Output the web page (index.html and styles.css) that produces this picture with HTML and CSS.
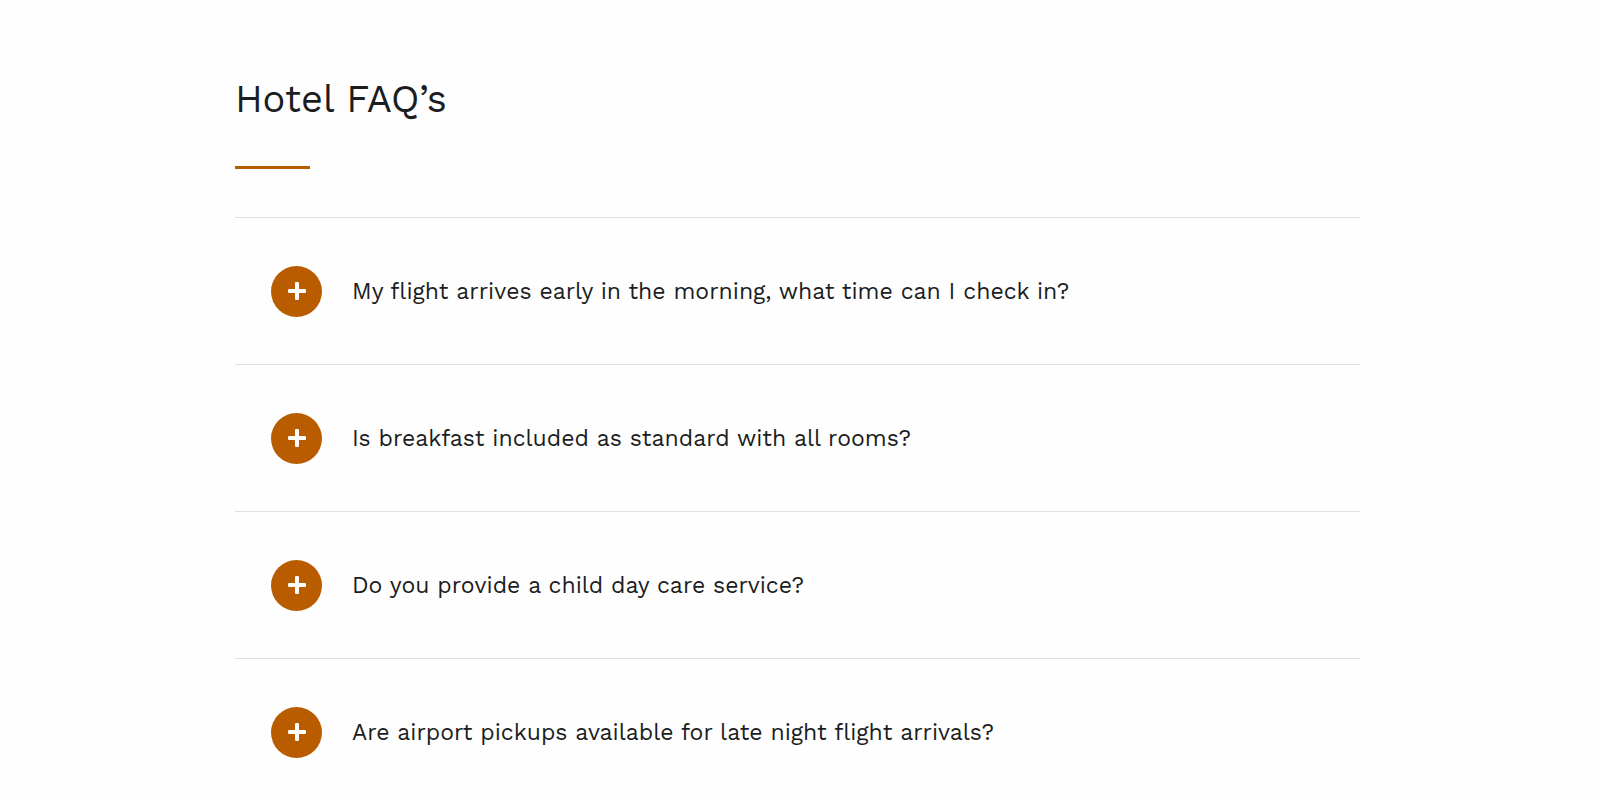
FILE: index.html
```
<!DOCTYPE html>
<html lang="en">
<head>
    <meta charset="UTF-8">
    <meta name="viewport" content="width=device-width, initial-scale=1">
    <title>Hotel FAQ’s</title>
    <link rel="stylesheet" href="styles.css">
</head>
<body>
<svg class="sprite" aria-hidden="true">
    <symbol id="plus" viewBox="0 0 18 18">
        <path d="M7 1.2Q7 0 8.2 0h1.6Q11 0 11 1.2V7h5.8Q18 7 18 8.2v1.6Q18 11 16.8 11H11v5.8Q11 18 9.8 18H8.2Q7 18 7 16.8V11H1.2Q0 11 0 9.8V8.2Q0 7 1.2 7H7z" fill="#fff"/>
    </symbol>
</svg>

<main class="faq">
    <h1 class="faq-title">Hotel FAQ’s</h1>
    <ul class="faq-list">
        <li class="faq-item">
            <button class="faq-question" type="button" aria-expanded="false">
                <span class="faq-icon"><svg><use href="#plus"/></svg></span>
                <span class="faq-text">My flight arrives early in the morning, what time can I check in?</span>
            </button>
        </li>
        <li class="faq-item">
            <button class="faq-question" type="button" aria-expanded="false">
                <span class="faq-icon"><svg><use href="#plus"/></svg></span>
                <span class="faq-text">Is breakfast included as standard with all rooms?</span>
            </button>
        </li>
        <li class="faq-item">
            <button class="faq-question" type="button" aria-expanded="false">
                <span class="faq-icon"><svg><use href="#plus"/></svg></span>
                <span class="faq-text">Do you provide a child day care service?</span>
            </button>
        </li>
        <li class="faq-item">
            <button class="faq-question" type="button" aria-expanded="false">
                <span class="faq-icon"><svg><use href="#plus"/></svg></span>
                <span class="faq-text">Are airport pickups available for late night flight arrivals?</span>
            </button>
        </li>
    </ul>
</main>
</body>
</html>
```
FILE: styles.css
```
* {
    box-sizing: border-box;
}

body {
    margin: 0;
    padding: 0 5px 0 0;
    background: #fefefe;
    color: #1b1d21;
    font-family: "Work Sans", Inter, sans-serif;
}

.sprite {
    display: none;
}

.faq {
    max-width: 1125px;
    margin: 0 auto;
    padding-top: 75px;
}

.faq-title {
    margin: 0;
    font-size: 38px;
    font-weight: 400;
    line-height: 48px;
}

.faq-title:after {
    content: "";
    display: block;
    width: 75px;
    height: 3px;
    margin-top: 43px;
    background: #b95c00;
}

.faq-list {
    margin: 48px 0 0;
    padding: 0;
    list-style: none;
}

.faq-item {
    border-top: 1px solid #dedede;
}

.faq-question {
    display: flex;
    align-items: center;
    gap: 30px;
    width: 100%;
    padding: 48px 36px 47px;
    border: 0;
    background: none;
    color: inherit;
    font: inherit;
    font-size: 23px;
    line-height: 28px;
    text-align: left;
    cursor: pointer;
}

.faq-icon {
    display: flex;
    flex: none;
    align-items: center;
    justify-content: center;
    width: 51px;
    height: 51px;
    padding-bottom: 2px;
    border-radius: 50%;
    background: #b95c00;
}

.faq-icon svg {
    width: 18px;
    height: 18px;
}
```
